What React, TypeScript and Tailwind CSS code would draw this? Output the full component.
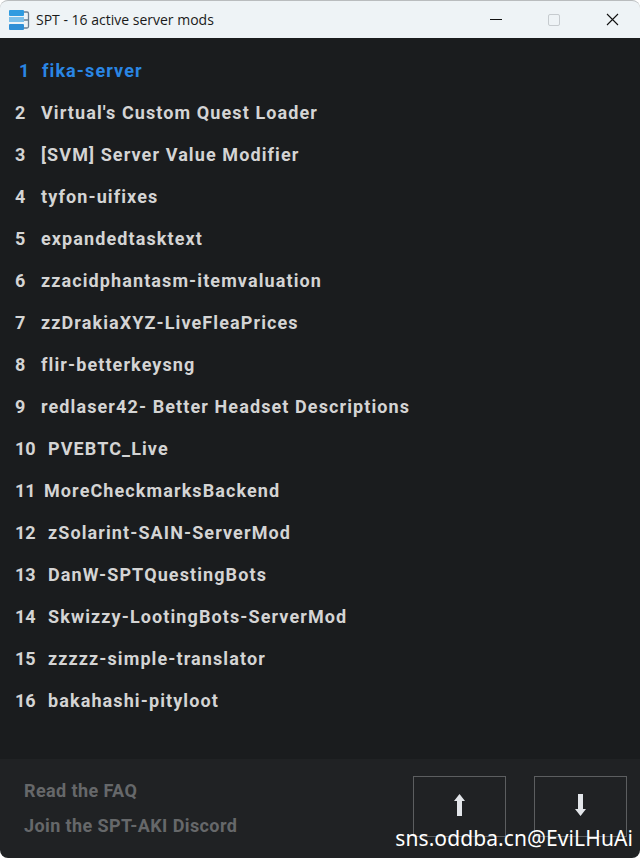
const mods = [
  'fika-server',
  "Virtual's Custom Quest Loader",
  '[SVM] Server Value Modifier',
  'tyfon-uifixes',
  'expandedtasktext',
  'zzacidphantasm-itemvaluation',
  'zzDrakiaXYZ-LiveFleaPrices',
  'flir-betterkeysng',
  'redlaser42- Better Headset Descriptions',
  'PVEBTC_Live',
  'MoreCheckmarksBackend',
  'zSolarint-SAIN-ServerMod',
  'DanW-SPTQuestingBots',
  'Skwizzy-LootingBots-ServerMod',
  'zzzzz-simple-translator',
  'bakahashi-pityloot',
];

function AppIcon() {
  return (
    <svg width="22" height="22" viewBox="0 0 22 22">
      <rect x="1" y="1" width="15" height="6" rx="1" fill="#2f9be0" />
      <rect x="1" y="8" width="15" height="5" fill="#7cc0ea" />
      <rect x="1" y="15" width="15" height="6" rx="1" fill="#2f8fd6" />
      <path d="M16 3h3a1.5 1.5 0 0 1 1.5 1.5v13a1.5 1.5 0 0 1-1.5 1.5h-3M16 11h4.5" stroke="#6b7f90" strokeWidth="1.3" fill="none" />
    </svg>
  );
}

function TitleBar() {
  return (
    <div className="flex h-[38px] items-center rounded-t-lg border-t border-[#b9bcbe] bg-[#eef3f6] font-['Open_Sans',sans-serif] text-[14px] text-[#1a1a1a]">
      <div className="ml-[8px] mr-[6px]">
        <AppIcon />
      </div>
      <span>SPT - 16 active server mods</span>
      <div className="ml-auto flex items-center">
        <div className="mr-[46px] h-px w-[12px] bg-[#111]" />
        <div className="mr-[46px] size-[12px] rounded-[2px] border border-[#c6cbcf]" />
        <svg width="13" height="13" viewBox="0 0 13 13" className="mr-[21px]">
          <path d="M1 1l11 11M12 1L1 12" stroke="#111" strokeWidth="1.1" />
        </svg>
      </div>
    </div>
  );
}

function ArrowButton({ dir }: { dir: 'up' | 'down' }) {
  return (
    <button className="flex h-[61px] w-[93px] justify-center border border-[#5c5e60] pt-[16px]">
      <svg width="11" height="24" viewBox="0 0 11 24" className={dir === 'down' ? 'rotate-180' : ''}>
        <path d="M5.5 1L11 8H8V23H3V8H0Z" fill="#e3e6ea" />
      </svg>
    </button>
  );
}

export default function App() {
  return (
    <div className="relative flex h-[858px] w-[640px] flex-col overflow-hidden bg-white font-['Roboto',sans-serif]">
      <TitleBar />
      <div className="flex flex-1 flex-col bg-[#1a1c1e] pt-[11px]">
        {mods.map((name, i) => (
          <div
            key={name}
            className={`flex h-[42px] items-center text-[18px] font-bold ${i === 0 ? 'text-[#2a86e4]' : 'text-[#d4d4d4]'}`}
          >
            <span className={i === 0 ? 'w-[42px] pl-[19px]' : i === 10 ? 'w-[44px] pl-[15px]' : i < 9 ? 'w-[41px] pl-[15px]' : 'w-[48px] pl-[15px]'}>
              {i + 1}
            </span>
            <span className="tracking-[1.1px]">{name}</span>
          </div>
        ))}
      </div>
      <div className="flex h-[99px] items-start rounded-b-lg bg-[#202224]">
        <div className="flex flex-col gap-[14px] pl-[24px] pt-[21px] text-[18px] font-bold leading-[21px] tracking-[0.4px] text-[#66686a]">
          <span>Read the FAQ</span>
          <span>Join the SPT-AKI Discord</span>
        </div>
        <div className="ml-auto flex gap-[28px] pr-[13px] pt-[17px]">
          <ArrowButton dir="up" />
          <ArrowButton dir="down" />
        </div>
      </div>
      <div className="absolute bottom-[6px] right-[7px] font-['Noto_Sans',sans-serif] text-[21px] leading-[28px] tracking-[0.1px] text-white">
        sns.oddba.cn@EviLHuAi
      </div>
    </div>
  );
}
